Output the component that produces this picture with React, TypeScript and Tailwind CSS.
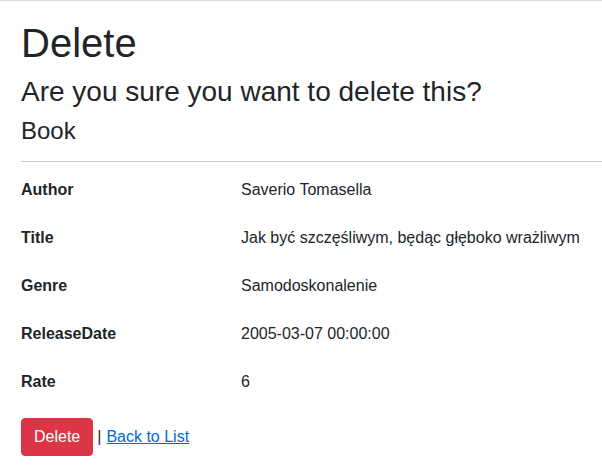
import React from 'react';

interface Field {
  label: string;
  value: string;
}

const fields: Field[] = [
  { label: 'Author', value: 'Saverio Tomasella' },
  { label: 'Title', value: 'Jak być szczęśliwym, będąc głęboko wrażliwym' },
  { label: 'Genre', value: 'Samodoskonalenie' },
  { label: 'ReleaseDate', value: '2005-03-07 00:00:00' },
  { label: 'Rate', value: '6' },
];

export default function App() {
  return (
    <div className="min-h-[472px] bg-white border-t border-[#d9d9d9] text-[#212529] font-['Liberation_Sans',Arial,sans-serif]">
      <div className="pl-[21px] pt-[18px]">
        <h1 className="text-[40px] leading-[1.2] mb-2 font-normal">Delete</h1>
        <h3 className="text-[28px] leading-[1.2] mb-2 font-normal">Are you sure you want to delete this?</h3>
        <div>
          <h4 className="text-[24px] leading-[1.2] font-normal">Book</h4>
          <hr className="mt-4 border-t border-[#cccccc]" />
          <div className="mt-[4px] grid grid-cols-[220px_1fr] text-base leading-6">
            {fields.map(f => (
              <React.Fragment key={f.label}>
                <div className="py-3 font-bold">{f.label}</div>
                <div className="py-3 whitespace-nowrap">{f.value}</div>
              </React.Fragment>
            ))}
          </div>
          <form className="mt-[12px] flex items-center text-base leading-6">
            <button
              type="button"
              className="h-[38px] px-3 bg-[#dc3545] text-white rounded-[4px] border border-[#dc3545]"
            >
              Delete
            </button>
            <span className="ml-[4px] mr-[5px]">|</span>
            <a href="#" className="text-[#0069d9] underline">Back to List</a>
          </form>
        </div>
      </div>
    </div>
  );
}
